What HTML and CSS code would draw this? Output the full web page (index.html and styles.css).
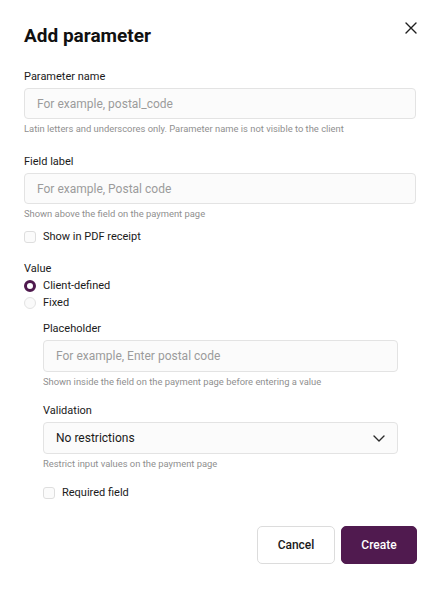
FILE: index.html
```html
<!DOCTYPE html>
<html lang="en">
<head>
<meta charset="utf-8">
<title>Add parameter</title>
<link rel="stylesheet" href="styles.css">
</head>
<body>
<div class="dialog">
  <div class="header">
    <h1 class="title">Add parameter</h1>
    <button class="close" aria-label="Close">
      <svg width="12" height="12" viewBox="0 0 12 12"><path d="M1 1L11 11M11 1L1 11" stroke="#1f1f1f" stroke-width="1.4" stroke-linecap="round"/></svg>
    </button>
  </div>

  <div class="field f1">
    <div class="label">Parameter name</div>
    <div class="input placeholder">For example, postal_code</div>
    <div class="hint">Latin letters and underscores only. Parameter name is not visible to the client</div>
  </div>

  <div class="field f2">
    <div class="label">Field label</div>
    <div class="input placeholder">For example, Postal code</div>
    <div class="hint">Shown above the field on the payment page</div>
  </div>

  <div class="check-row pdf">
    <span class="box"></span>
    <span>Show in PDF receipt</span>
  </div>

  <div class="value-label">Value</div>
  <div class="radio-row"><span class="radio checked"></span><span>Client-defined</span></div>
  <div class="radio-row"><span class="radio"></span><span>Fixed</span></div>

  <div class="sub">
    <div class="field f3">
      <div class="label">Placeholder</div>
      <div class="input tall placeholder">For example, Enter postal code</div>
      <div class="hint">Shown inside the field on the payment page before entering a value</div>
    </div>
    <div class="field f4">
      <div class="label">Validation</div>
      <div class="input tall select">
        <span>No restrictions</span>
        <svg class="chev" width="12" height="7" viewBox="0 0 12 7"><path d="M1 1L6 6L11 1" fill="none" stroke="#2a2a2a" stroke-width="1.4" stroke-linecap="round" stroke-linejoin="round"/></svg>
      </div>
      <div class="hint">Restrict input values on the payment page</div>
    </div>
    <div class="check-row req">
      <span class="box"></span>
      <span>Required field</span>
    </div>
  </div>

  <div class="actions">
    <button class="btn cancel">Cancel</button>
    <button class="btn create">Create</button>
  </div>
</div>
</body>
</html>
```

FILE: styles.css
```css
* { box-sizing: border-box; }
html, body { margin: 0; padding: 0; background: #fff; }
body {
  font-family: Roboto, "Liberation Sans", Arial, sans-serif;
  color: #1a1a1a;
  width: 438px;
  height: 589px;
  overflow: hidden;
}
.dialog {
  padding: 24px 22px 0 24px;
  display: flex;
  flex-direction: column;
}
.header {
  display: flex;
  justify-content: space-between;
  align-items: flex-start;
}
.title {
  margin: 0;
  font-size: 19px;
  line-height: 24px;
  font-weight: 700;
  color: #111;
}
.close {
  border: 0;
  background: none;
  padding: 0;
  margin-top: -2px;
  margin-right: -1px;
  width: 12px;
  height: 12px;
  display: flex;
}
.field { display: flex; flex-direction: column; }
.f1 { margin-top: 20px; }
.f2 { margin-top: 18px; }
.label {
  font-size: 11px;
  line-height: 16px;
  padding-top: 1px;
  margin-bottom: 3px;
  color: #1a1a1a;
}
.input {
  height: 31px;
  border: 1px solid #e3e3e3;
  border-radius: 4px;
  background: #fbfbfb;
  padding: 0 12px;
  font-size: 12px;
  display: flex;
  align-items: center;
}
.input.tall { height: 32px; }
.placeholder { color: #9b9b9b; }
.select { color: #1a1a1a; justify-content: space-between; }
.hint {
  font-size: 9.4px;
  line-height: 12px;
  margin-top: 4px;
  color: #8f8f8f;
}
.check-row {
  display: flex;
  align-items: center;
  gap: 7px;
  font-size: 11px;
  line-height: 16px;
}
.pdf { margin-top: 9px; }
.box {
  width: 12px;
  height: 12px;
  border: 1px solid #dedede;
  border-radius: 3px;
  background: #fbfbfb;
}
.value-label {
  margin-top: 16px;
  font-size: 11px;
  line-height: 16px;
}
.radio-row {
  display: flex;
  align-items: center;
  gap: 7px;
  font-size: 11px;
  height: 17px;
}
.radio {
  width: 12px;
  height: 12px;
  border-radius: 50%;
  border: 1px solid #e3e3e3;
  background: #fafafa;
}
.radio.checked {
  border: 3.5px solid #4f1a4e;
  background: #fff;
}
.sub {
  margin-left: 19px;
  margin-right: 18px;
  display: flex;
  flex-direction: column;
}
.f3 { margin-top: 9px; }
.f4 { margin-top: 14px; }
.req { margin-top: 15px; }
.actions {
  margin-top: 25px;
  display: flex;
  justify-content: flex-end;
  gap: 6px;
  margin-right: -1px;
}
.btn {
  height: 38px;
  border-radius: 5px;
  font-family: Roboto, "Liberation Sans", Arial, sans-serif;
  font-size: 12px;
  font-weight: 500;
  padding: 0;
}
.cancel {
  width: 78px;
  background: #fff;
  border: 1px solid #dcdcdc;
  color: #1a1a1a;
}
.create {
  width: 76px;
  background: #501a4f;
  border: 1px solid #501a4f;
  color: #fff;
}
```
